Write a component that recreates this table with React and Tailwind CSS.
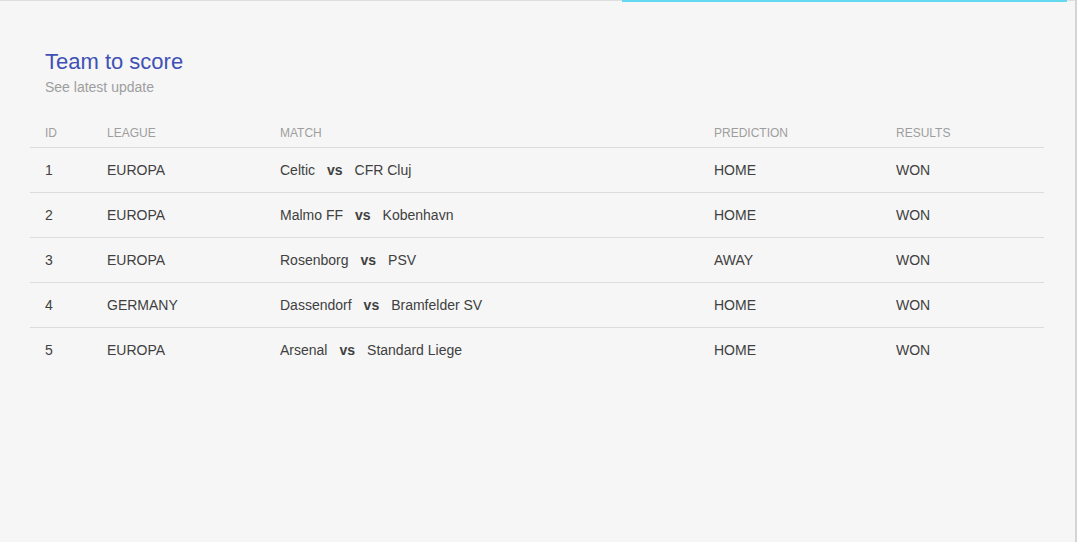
import React from "react";

const rows = [
  { id: 1, league: "EUROPA", home: "Celtic", away: "CFR Cluj", prediction: "HOME", result: "WON" },
  { id: 2, league: "EUROPA", home: "Malmo FF", away: "Kobenhavn", prediction: "HOME", result: "WON" },
  { id: 3, league: "EUROPA", home: "Rosenborg", away: "PSV", prediction: "AWAY", result: "WON" },
  { id: 4, league: "GERMANY", home: "Dassendorf", away: "Bramfelder SV", prediction: "HOME", result: "WON" },
  { id: 5, league: "EUROPA", home: "Arsenal", away: "Standard Liege", prediction: "HOME", result: "WON" },
];

const cols = "grid grid-cols-[77px_173px_434px_182px_1fr]";

const App = () => {
  return (
    <div
      className="w-full h-[542px] bg-[#f6f6f6] border-r-2 border-[#d4d4d4] overflow-hidden"
      style={{ fontFamily: '"Liberation Sans", Arial, sans-serif' }}
    >
      {/* top progress strip */}
      <div className="flex h-[2px]">
        <div className="w-[622px] border-t border-[#dedede]" />
        <div className="w-[445px] bg-[#66d9f2]" />
        <div className="flex-1 border-t border-[#dedede]" />
      </div>

      <div className="pt-[47px] px-[30px] w-[1074px]">
        <div className="pl-[15px]">
          <h1 className="text-[22px] leading-[26px] text-[#3f51b5]">Team to score</h1>
          <p className="mt-[2px] text-[14px] leading-[20px] text-[#9e9e9e]">See latest update</p>
        </div>

        <div className="mt-[21px]">
          <div className={`${cols} h-[30px] items-center border-b border-[#dcdcdc] text-[12px] text-[#9e9e9e]`}>
            <div className="pl-[15px]">ID</div>
            <div>LEAGUE</div>
            <div>MATCH</div>
            <div>PREDICTION</div>
            <div>RESULTS</div>
          </div>
          {rows.map((r, i) => (
            <div
              key={"row-" + r.id}
              className={`${cols} h-[45px] items-center text-[14px] text-[#404040] ${
                i < rows.length - 1 ? "border-b border-[#dcdcdc]" : ""
              }`}
            >
              <div className="pl-[15px]">{r.id}</div>
              <div>{r.league}</div>
              <div className="flex items-center">
                <span>{r.home}</span>
                <span className="font-bold mx-[12px]">vs</span>
                <span>{r.away}</span>
              </div>
              <div>{r.prediction}</div>
              <div>{r.result}</div>
            </div>
          ))}
        </div>
      </div>
    </div>
  );
};

export default App;
